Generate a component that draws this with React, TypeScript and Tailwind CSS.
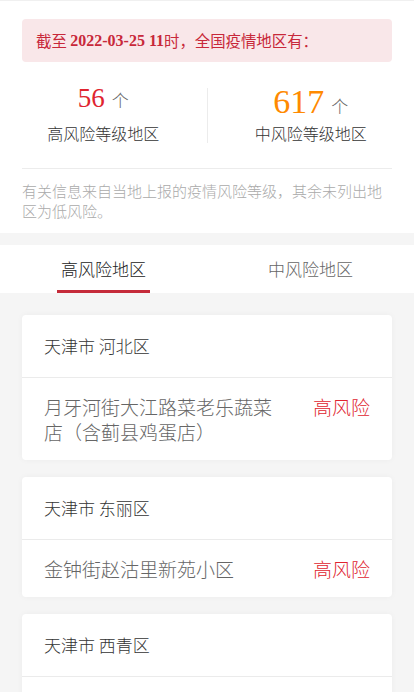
const cjk = '[font-family:"Noto_Sans_CJK_SC","Noto_Sans",sans-serif]'

type Area = { city: string; place: string; level: string }

const areas: Area[] = [
  { city: '天津市 河北区', place: '月牙河街大江路菜老乐蔬菜店（含蓟县鸡蛋店）', level: '高风险' },
  { city: '天津市 东丽区', place: '金钟街赵沽里新苑小区', level: '高风险' },
  { city: '天津市 西青区', place: '张家窝镇社区', level: '高风险' },
]

export default function App() {
  return (
    <div className={`w-[414px] h-[692px] overflow-hidden bg-[#f5f5f5] font-light ${cjk}`}>
      {/* Summary */}
      <div className="bg-white pt-[18px] pb-[12px] border-t border-[#f0f0f0]">
        <div className="mx-[22px] h-[43px] rounded-[4px] bg-[#f9e7e9] px-[14px] flex items-center text-[15.4px] text-[#c8283a] font-normal">
          截至&nbsp;<span className="[font-family:'Liberation_Serif',serif] font-bold text-[16px]">2022-03-25 11</span>时，全国疫情地区有：
        </div>

        <div className="flex items-center h-[106px]">
          <StatCol num="56" numClass="text-[#e0242f] text-[27px]" label="高风险等级地区" />
          <div className="w-px h-[55px] bg-[#ececec]" />
          <StatCol num="617" numClass="text-[#ff8a00] text-[34px]" label="中风险等级地区" />
        </div>

        <p className="mx-[22px] border-t border-[#ececec] pt-[12px] text-[15px] leading-[20px] text-[#aaaaaa]">
          有关信息来自当地上报的疫情风险等级，其余未列出地区为低风险。
        </p>
      </div>

      {/* Tabs */}
      <div className="mt-[12px] bg-white h-[48px] flex">
        <div className="flex-1 relative flex items-center justify-center text-[17px] text-[#222]">
          高风险地区
          <span className="absolute bottom-0 left-[57px] w-[93px] h-[3px] bg-[#c52b3a]" />
        </div>
        <div className="flex-1 flex items-center justify-center text-[17px] text-[#666]">中风险地区</div>
      </div>

      {/* List */}
      <div className="px-[22px] pt-[22px] flex flex-col gap-[17px]">
        {areas.map((a) => (
          <div key={a.city} className="bg-white rounded-[4px] shadow-[0_0_6px_rgba(0,0,0,0.04)]">
            <div className="h-[63px] px-[22px] flex items-center text-[17px] text-[#333] border-b border-[#ebebeb]">
              {a.city}
            </div>
            <div className="px-[22px] py-[16px] flex items-start justify-between">
              <p className="w-[232px] text-[19px] leading-[25px] text-[#666]">{a.place}</p>
              <span className="text-[19px] leading-[25px] text-[#e0242f]">{a.level}</span>
            </div>
          </div>
        ))}
      </div>
    </div>
  )
}

function StatCol({ num, numClass, label }: { num: string; numClass: string; label: string }) {
  return (
    <div className="flex-1 flex flex-col items-center">
      <div className="flex items-baseline h-[36px]">
        <span className={`[font-family:'Liberation_Serif',serif] font-normal leading-none ${numClass}`}>{num}</span>
        <span className="ml-[7px] text-[17px] text-[#666]">个</span>
      </div>
      <div className="text-[16px] text-[#333]">{label}</div>
    </div>
  )
}
